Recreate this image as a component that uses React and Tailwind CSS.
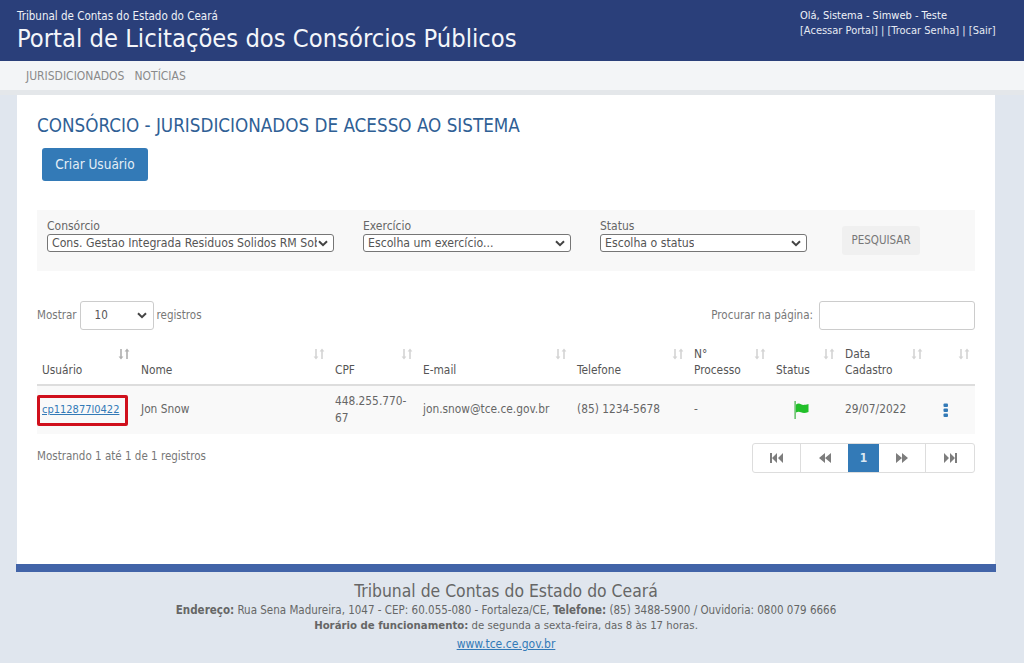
import React from "react";

const F = { fontFamily: '"DejaVu Sans", sans-serif', fontStretch: "condensed" };

function SortIcon({ active }) {
  return (
    <svg width="12" height="12" viewBox="0 0 12 12" className={active ? "text-[#b0b0b0]" : "text-[#d4d4d4]"} fill="currentColor">
      <path d="M2.2 1h1.6v7.5H5.4L3 11.5.6 8.500h1.600zM8.200 11h1.600V3.500h1.600L9 .5 6.600 3.500h1.600z" />
    </svg>
  );
}

function Chevron({ className = "" }) {
  return (
    <svg width="10" height="7" viewBox="0 0 10 7" className={className} fill="none" stroke="currentColor" strokeWidth="2">
      <path d="M1 1.200l4 4 4-4" />
    </svg>
  );
}

function FakeSelect({ text, className }) {
  return (
    <div className={`flex items-center justify-between h-[18px] border border-[#767676] rounded-[3px] bg-white pl-1 pr-[5px] text-[12.2px] text-[#555] overflow-hidden ${className}`}>
      <span className="whitespace-nowrap overflow-hidden">{text}</span>
      <Chevron className="text-[#444] shrink-0 ml-px" />
    </div>
  );
}

function Field({ label, text, width }) {
  return (
    <div className="flex flex-col">
      <span className="text-[12px] leading-[16px] text-[#666]">{label}</span>
      <FakeSelect text={text} className={width} />
    </div>
  );
}

const cols = [
  ["Usuário", "w-[99px]", true],
  ["Nome", "w-[194px]"],
  ["CPF", "w-[88px]"],
  ["E-mail", "w-[154px]"],
  ["Telefone", "w-[117px]"],
  ["N° Processo", "w-[82px]"],
  ["Status", "w-[69px]"],
  ["Data Cadastro", "w-[88px]"],
  ["", "w-[47px]"],
];

function PageBtn({ children, active, className = "" }) {
  return (
    <div className={`flex items-center justify-center h-full text-[12px] font-bold ${active ? "bg-[#337ab7] text-[#dbe7f2]" : "text-[#7d7d7d]"} ${className}`}>
      {children}
    </div>
  );
}

function First() {
  return <svg width="13" height="10" viewBox="0 0 13 10" fill="currentColor"><path d="M0 0h2v10H0zM7 0v10L2 5zM13 0v10L8 5z" /></svg>;
}
function Prev() {
  return <svg width="13" height="10" viewBox="0 0 13 10" fill="currentColor"><path d="M7 0v10L1 5zM13 0v10L7 5z" /></svg>;
}
function Next() {
  return <svg width="13" height="10" viewBox="0 0 13 10" fill="currentColor"><path d="M6 0v10l6-5zM0 0v10l6-5z" /></svg>;
}
function Last() {
  return <svg width="13" height="10" viewBox="0 0 13 10" fill="currentColor"><path d="M0 0v10l5-5zM6 0v10l5-5zM11 0h2v10h-2z" /></svg>;
}

export default function App() {
  return (
    <div style={F} className="h-[663px] overflow-hidden bg-[#e0e6ee] flex flex-col">
      <header className="h-[61px] bg-[#2a3f7a] flex justify-between pl-[17px] pr-[28px] text-white">
        <div>
          <div className="text-[11.5px] leading-[14px] pt-[9px] h-[24px] text-[#eef1f7]">Tribunal de Contas do Estado do Ceará</div>
          <div className="text-[25.3px] leading-[30px] text-[#f4f6fa]">Portal de Licitações dos Consórcios Públicos</div>
        </div>
        <div className="text-[11px] pt-[8px] leading-[15px] text-[#e6eaf3] w-[196px]">
          <div className="text-[#f0f3f8]">Olá, Sistema - Simweb - Teste</div>
          <div className="whitespace-nowrap">[Acessar Portal] | [Trocar Senha] | [Sair]</div>
        </div>
      </header>

      <nav className="h-[29px] bg-[#f3f5f7] flex items-center gap-[10px] pl-[26px] text-[12px] text-[#8a8a8a]">
        <span>JURISDICIONADOS</span>
        <span>NOTÍCIAS</span>
      </nav>
      <div className="h-[5px] bg-[#e4e7ea]" />

      <main className="mx-[17px] w-[978px] h-[469px] shrink-0 bg-white px-[20px]">
        <h1 className="text-[18.7px] leading-[22px] pt-[20px] h-[42px] text-[#2f6095]">CONSÓRCIO - JURISDICIONADOS DE ACESSO AO SISTEMA</h1>
        <div className="pl-[5px] pt-[11px]">
          <button className="block w-[106px] h-[33px] rounded-[3px] bg-[#337ab7] text-[#e4eef6] text-[13.5px]">Criar Usuário</button>
        </div>

        <section className="mt-[29px] h-[61px] w-[938px] bg-[#f8f8f8] flex pl-[10px] pt-[8px]">
          <Field label="Consórcio" text="Cons. Gestao Integrada Residuos Solidos RM Sobral" width="w-[287px]" />
          <div className="ml-[29px]"><Field label="Exercício" text="Escolha um exercício..." width="w-[208px]" /></div>
          <div className="ml-[29px]"><Field label="Status" text="Escolha o status" width="w-[207px]" /></div>
          <button className="ml-[35px] mt-[8px] w-[78px] h-[29px] bg-[#f0f0f0] rounded-[3px] text-[11.5px] text-[#777]">PESQUISAR</button>
        </section>

        <div className="mt-[30px] flex justify-between items-center h-[29px] text-[11.5px] text-[#777]">
          <div className="flex items-center">
            <span>Mostrar</span>
            <div className="ml-[3px] w-[74px] h-[29px] border border-[#ccc] rounded-[3px] flex items-center justify-between pl-[14px] pr-[6px] text-[#555]">
              <span>10</span>
              <Chevron className="text-[#444]" />
            </div>
            <span className="ml-[3px]">registros</span>
          </div>
          <div className="flex items-center">
            <span>Procurar na página:</span>
            <input aria-label="Procurar na página" className="ml-[6px] w-[156px] h-[29px] border border-[#ccc] rounded-[3px] bg-white" />
          </div>
        </div>

        <table className="mt-[11px] w-[938px] table-fixed border-collapse text-[11.8px] text-[#666]">
          <thead>
            <tr className="h-[44px] border-b-2 border-[#ddd]">
              {cols.map(([name, w, active], i) => (
                <th key={i} className={`${w} relative font-normal text-left align-bottom pl-[5px] pb-[6px] leading-[16px] text-[#555]`}>
                  <span className="block pr-[16px]">{name}</span>
                  <span className={`absolute top-[7px] ${active ? "right-[6px]" : "right-[5px]"}`}><SortIcon active={active} /></span>
                </th>
              ))}
            </tr>
          </thead>
          <tbody>
            <tr className="h-[49px] bg-[#f9f9f9]">
              <td className="pl-[5px] relative">
                <a href="#" className="text-[#337ab7] underline text-[11px]">cp112877l0422</a>
                <span className="absolute left-0 top-[9px] w-[91px] h-[31px] border-[3px] border-[#d0101c] rounded-[2px]" />
              </td>
              <td className="pl-[5px]">Jon Snow</td>
              <td className="pl-[5px] pr-[8px] leading-[17px]">448.255.770-67</td>
              <td className="pl-[5px] whitespace-nowrap">jon.snow@tce.ce.gov.br</td>
              <td className="pl-[5px]">(85) 1234-5678</td>
              <td className="pl-[5px]">-</td>
              <td className="pl-[23px]">
                <svg width="16" height="18" viewBox="0 0 16 18" aria-label="Ativo" className="block">
                  <path d="M0.500 0h1.200v18H0.500z" fill="#3cb043" />
                  <path d="M2 3.500c2-1.500 3.500-1.200 5-.3s3 1 7.500-.2v8c-3.500 1.500-6 1-7.500.3s-3-1-5 .2z" fill="#22c02a" />
                </svg>
              </td>
              <td className="pl-[5px]">29/07/2022</td>
              <td className="pl-[5px]">
                <svg width="6" height="15" viewBox="0 0 6 15" className="ml-[10px]" fill="#337ab7">
                  <rect x="0.500" y="0.500" width="4.500" height="3.500" rx="1" />
                  <rect x="0.500" y="5.500" width="4.500" height="3.500" rx="1" />
                  <rect x="0.500" y="10.500" width="4.500" height="3.500" rx="1" />
                </svg>
              </td>
            </tr>
          </tbody>
        </table>

        <div className="flex justify-between mt-[9px]">
          <div className="text-[11.5px] text-[#777] pt-[5px]">Mostrando 1 até 1 de 1 registros</div>
          <div className="flex w-[223px] h-[30px] border border-[#ddd] rounded-[3px] overflow-hidden">
            <PageBtn className="w-[48px] border-r border-[#ddd]"><First /></PageBtn>
            <PageBtn className="w-[47px]"><Prev /></PageBtn>
            <PageBtn active className="w-[32px]">1</PageBtn>
            <PageBtn className="w-[47px] border-r border-[#ddd]"><Next /></PageBtn>
            <PageBtn className="w-[48px]"><Last /></PageBtn>
          </div>
        </div>
      </main>

      <div className="mx-[16px] w-[980px] h-[8px] shrink-0 bg-[#4264a8]" />

      <footer className="w-[1012px] text-center text-[#666]">
        <div className="text-[17.4px] leading-[20px] pt-[9px] text-[#666]">Tribunal de Contas do Estado do Ceará</div>
        <div className="text-[11.5px] leading-[16px] mt-[1px]">
          <b>Endereço:</b> Rua Sena Madureira, 1047 - CEP: 60.055-080 - Fortaleza/CE, <b>Telefone:</b> (85) 3488-5900 / Ouvidoria: 0800 079 6666
        </div>
        <div className="text-[11.3px] leading-[16px]">
          <b>Horário de funcionamento:</b> de segunda a sexta-feira, das 8 às 17 horas.
        </div>
        <div className="text-[12px] leading-[16px] mt-[2px]">
          <a href="#" className="text-[#337ab7] underline">www.tce.ce.gov.br</a>
        </div>
      </footer>
    </div>
  );
}
